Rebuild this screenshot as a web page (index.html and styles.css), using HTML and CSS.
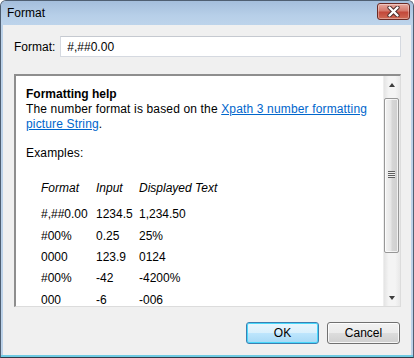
FILE: index.html
```html
<!DOCTYPE html>
<html lang="en">
<head>
    <meta charset="utf-8">
    <title>Format</title>
    <link rel="stylesheet" href="styles.css">
</head>
<body>
    <div class="window">
        <div class="titlebar">
            <span class="title">Format</span>
            <button class="close" aria-label="Close">
                <svg width="15" height="11" viewBox="0 0 15 11">
                    <path d="M3.5 1.5 L11.5 9.5 M11.5 1.5 L3.5 9.5" stroke="#4a2a28" stroke-width="4.2" stroke-linecap="round"/>
                    <path d="M3.5 1.5 L11.5 9.5 M11.5 1.5 L3.5 9.5" stroke="#ffffff" stroke-width="2.4" stroke-linecap="round"/>
                </svg>
            </button>
        </div>

        <div class="client">
            <div class="format-row">
                <label for="format">Format:</label>
                <input type="text" id="format" value="#,##0.00">
            </div>

            <div class="help">
                <div class="help-body">
                    <p class="help-title">Formatting help</p>
                    <p>The number format is based on the <a href="#">Xpath 3 number formatting</a><br><a href="#">picture String</a>.</p>
                    <p class="examples">Examples:</p>
                    <table class="samples">
                        <thead>
                            <tr><th>Format</th><th>Input</th><th>Displayed Text</th></tr>
                        </thead>
                        <tbody>
                            <tr><td>#,##0.00</td><td>1234.5</td><td>1,234.50</td></tr>
                            <tr><td>#00%</td><td>0.25</td><td>25%</td></tr>
                            <tr><td>0000</td><td>123.9</td><td>0124</td></tr>
                            <tr><td>#00%</td><td>-42</td><td>-4200%</td></tr>
                            <tr><td>000</td><td>-6</td><td>-006</td></tr>
                        </tbody>
                    </table>
                </div>
                <div class="scrollbar">
                    <div class="arrow-btn"><span class="arrow up"></span></div>
                    <div class="track">
                        <div class="thumb"><span class="grip"></span></div>
                    </div>
                    <div class="arrow-btn"><span class="arrow down"></span></div>
                </div>
            </div>

            <div class="buttons">
                <button class="btn btn-default">OK</button>
                <button class="btn">Cancel</button>
            </div>
        </div>
    </div>
</body>
</html>
```

FILE: styles.css
```css
* {
    box-sizing: border-box;
}

body {
    margin: 0;
    font-family: "Liberation Sans", Arial, sans-serif;
    font-size: 12px;
    color: #000;
    background: #fff;
}

.window {
    width: 414px;
    height: 358px;
    display: flex;
    flex-direction: column;
    border: 1px solid #4f5f72;
    border-bottom-color: #2f3b48;
    border-radius: 6px 6px 0 0;
    background: #bcd2e9;
    padding: 0 2px 2px;
    box-shadow: inset 0 -2px 0 #6fcbe3;
}

.titlebar {
    height: 24px;
    display: flex;
    align-items: center;
    justify-content: space-between;
    margin: 0 -2px;
    padding: 0 3px 0 6px;
    border-radius: 5px 5px 0 0;
    background: linear-gradient(#a4bedc, #b7cfe8 60%, #bdd4eb);
}

.title {
    font-size: 12px;
    color: #000;
}

.close {
    width: 33px;
    height: 17px;
    margin-top: -3px;
    padding: 0;
    display: flex;
    align-items: center;
    justify-content: center;
    border: 1px solid #6b2a24;
    border-radius: 3px;
    background: linear-gradient(#e7a99f, #d57a6d 45%, #c3483a 55%, #cf6a55);
    box-shadow: inset 0 0 0 1px rgba(255, 255, 255, 0.35);
}

.client {
    flex: 1;
    display: flex;
    flex-direction: column;
    background: #f0f0f0;
    padding: 11px 10px 11px 11px;
}

.format-row {
    display: flex;
    align-items: center;
    gap: 5px;
    height: 21px;
}

.format-row label {
    font-size: 12px;
}

.format-row input {
    flex: 1;
    height: 21px;
    padding: 0 6px;
    border: 1px solid #d5d9e0;
    border-top-color: #c5c9d0;
    background: #fff;
    font-family: "Liberation Sans", Arial, sans-serif;
    font-size: 12px;
    color: #000;
    outline: none;
}

.help {
    height: 233px;
    margin-top: 17px;
    display: flex;
    border-top: 2px solid #8e8e8e;
    border-left: 2px solid #8e8e8e;
    border-right: 1px solid #dcdcdc;
    border-bottom: 1px solid #dcdcdc;
    background: #fff;
}

.help-body {
    flex: 1;
    overflow: hidden;
    padding: 11px 10px 0;
    line-height: 15px;
    letter-spacing: 0.15px;
}

.help-body p {
    margin: 0;
}

.help-title {
    font-weight: bold;
    letter-spacing: 0;
}

.help-body a {
    color: #0066cc;
    text-decoration: underline;
}

.examples {
    margin-top: 14px !important;
}

.samples {
    margin: 17px 0 0 15px;
    border-collapse: collapse;
    letter-spacing: 0;
}

.samples th,
.samples td {
    padding: 0;
    height: 21.3px;
    line-height: 15px;
    text-align: left;
    white-space: nowrap;
}

.samples th {
    font-weight: normal;
    font-style: italic;
}

.samples th:nth-child(1),
.samples td:nth-child(1) {
    width: 55px;
}

.samples th:nth-child(2),
.samples td:nth-child(2) {
    width: 43px;
}

.samples tbody tr:first-child td {
    padding-top: 5px;
    height: 26.3px;
}

.scrollbar {
    width: 17px;
    display: flex;
    flex-direction: column;
    background: linear-gradient(90deg, #e4e4e4, #f4f4f4 30%, #f4f4f4 70%, #e8e8e8);
    border-left: 1px solid #eeeeee;
}

.arrow-btn {
    height: 17px;
    display: flex;
    align-items: center;
    justify-content: center;
}

.arrow {
    width: 0;
    height: 0;
    border-left: 3.5px solid transparent;
    border-right: 3.5px solid transparent;
}

.arrow.up {
    border-bottom: 4px solid #3d3d3d;
}

.arrow.down {
    border-top: 4px solid #3d3d3d;
}

.track {
    flex: 1;
}

.thumb {
    height: 155px;
    margin: 5px 1px 0 0;
    display: flex;
    align-items: center;
    justify-content: center;
    border: 1px solid #979797;
    border-radius: 2px;
    background: linear-gradient(90deg, #f3f3f3, #e6e6e6 45%, #d6d6d6 55%, #cfcfcf);
    box-shadow: inset 0 0 0 1px rgba(255, 255, 255, 0.7);
}

.grip {
    width: 7px;
    height: 7px;
    margin-top: -2px;
    background: repeating-linear-gradient(#5f5f5f 0 1px, #f0f0f0 1px 2px);
}

.buttons {
    display: flex;
    justify-content: flex-end;
    gap: 8px;
    margin-top: 15px;
    padding-right: 1px;
}

.btn {
    width: 73px;
    height: 22px;
    padding: 0;
    font-family: "Liberation Sans", Arial, sans-serif;
    font-size: 12px;
    color: #000;
    border: 1px solid #707070;
    border-radius: 3px;
    background: linear-gradient(#f2f2f2, #ebebeb 50%, #dddddd 50%, #cfcfcf);
    box-shadow: inset 0 0 0 1px rgba(255, 255, 255, 0.8);
}

.btn-default {
    border-color: #3c7fb1;
    background: linear-gradient(#eaf6fd, #d9f0fc 50%, #bee6fd 50%, #a7d9f5);
    box-shadow: inset 0 0 0 1px #48d8fb;
}
```
